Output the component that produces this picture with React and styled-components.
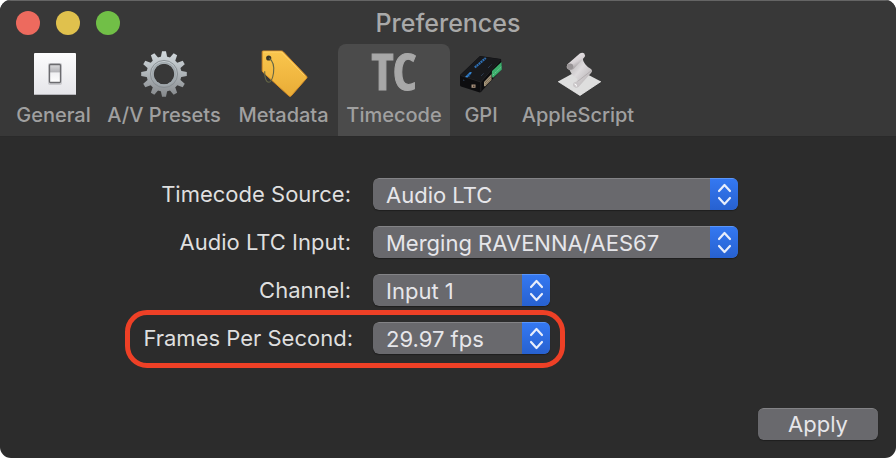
import React, { useState } from 'react'
import styled, { createGlobalStyle } from 'styled-components'


const GlobalStyle = createGlobalStyle`
    *, *::before, *::after{
        box-sizing: border-box;
    }
    body{
        margin: 0;
        background: #fff;
        font-family: Inter, "Liberation Sans", sans-serif;
    }
    button, select{
        font: inherit;
    }
`

const WindowStyle = styled.div`
    display: flex;
    flex-direction: column;
    min-height: 100vh;
    overflow: hidden;
    border-radius: 11px;
    background: #2c2c2c;
    color: #dfdfdf;
    font-size: 22px;
    line-height: 32px;
`

const Header = styled.header`
    background: #383838;
    border-top: 1px solid #656565;
    border-bottom: 1px solid #2a2a2a;
`

const TitleBar = styled.div`
    display: grid;
    grid-template-columns: 1fr auto 1fr;
    align-items: center;
    height: 43px;
    padding: 0 16px;
`

const WindowButtons = styled.div`
    display: flex;
    gap: 16px;
`

const WindowButton = styled.button`
    width: 24px;
    height: 24px;
    padding: 0;
    border: 0;
    border-radius: 50%;
    background: ${({ $color }) => $color};
`

const Title = styled.h1`
    margin: 0;
    color: #a9a9a9;
    font-size: 25px;
    font-weight: 500;
`

const Toolbar = styled.nav`
    display: grid;
    grid-template-columns: 91px 130px 109px 112px 62px 132px;
    padding: 0 8px;
`

const ToolbarButton = styled.button`
    display: flex;
    flex-direction: column;
    align-items: center;
    height: 92px;
    padding: 6px 0 0;
    border: 0;
    border-radius: 8px 8px 0 0;
    background: ${({ $active }) => ($active ? '#4b4b4b' : 'transparent')};
    color: #a0a0a0;
    font-size: 20px;
    font-weight: 500;
    line-height: 34px;
    white-space: nowrap;
    svg{
        display: block;
        flex: none;
        overflow: visible;
    }
`

const Form = styled.form`
    display: flex;
    flex: 1;
    flex-direction: column;
    padding: 41px 18px 18px 125px;
`

const Fields = styled.div`
    display: flex;
    flex-direction: column;
    gap: 16px;
    padding-right: 140px;
`

const Row = styled.div`
    position: relative;
    display: grid;
    grid-template-columns: 228px ${({ $short }) => ($short ? '177px' : '1fr')};
    gap: 20px;
    width: ${({ $short }) => ($short ? 'fit-content' : 'auto')};
`

const Highlight = styled.span`
    position: absolute;
    inset: -12px -15px -14px 0;
    border: 5px solid #ee4026;
    border-radius: 22px;
    pointer-events: none;
`

const Label = styled.label`
    padding-right: ${({ $wide }) => ($wide ? '0' : '2px')};
    text-align: right;
    white-space: nowrap;
`

const SelectWrap = styled.div`
    position: relative;
    overflow: hidden;
    border-radius: 6px;
    box-shadow: 0 1px 1px #1f1f1f;
`

const Select = styled.select`
    display: block;
    width: 100%;
    height: 32px;
    padding: 0 32px 2px 13px;
    border: 0;
    border-top: 1px solid #838386;
    border-radius: 6px;
    appearance: none;
    background: #69696d;
    color: #e6e6ea;
`

const Stepper = styled.span`
    position: absolute;
    top: 0;
    right: 0;
    bottom: 0;
    width: 28px;
    border-top: 1px solid #5a96fa;
    background: linear-gradient(#3478f1, #2761d0);
    pointer-events: none;
    svg{
        display: block;
    }
`

const ApplyButton = styled.button`
    width: 120px;
    height: 32px;
    margin-top: auto;
    align-self: flex-end;
    padding: 0;
    border: 0;
    border-top: 1px solid #838386;
    border-radius: 6px;
    background: #69696d;
    box-shadow: 0 1px 1px #1f1f1f;
    color: #e6e6ea;
    line-height: 31px;
`

function SwitchIcon() {
  return (
    <svg width="48" height="48" viewBox="0 0 48 48" aria-hidden="true">
        <defs>
            <linearGradient id="plate" x2="0" y2="1">
                <stop stopColor="#fcfcfd" />
                <stop offset="1" stopColor="#e5e5e9" />
            </linearGradient>
            <linearGradient id="rocker" x2="0" y2="1">
                <stop stopColor="#dcdcde" />
                <stop offset=".42" stopColor="#b2b2b6" />
                <stop offset=".46" stopColor="#f0f0f2" />
                <stop offset="1" stopColor="#fff" />
            </linearGradient>
        </defs>
        <rect x="4" y="3" width="42" height="42" rx="1" fill="url(#plate)" />
        <path d="M4.5 44.5h41" stroke="#b5b5ba" />
        <rect x="18" y="13" width="14" height="22" rx="2" fill="#c9c9cd" />
        <rect x="19.5" y="14.5" width="11" height="18" rx="1" fill="url(#rocker)" stroke="#6b6b6f" strokeWidth="1.3" />
    </svg>
  )
}

const teeth = [0, 30, 60, 90, 120, 150, 180, 210, 240, 270, 300, 330]

function GearIcon() {
  return (
    <svg width="48" height="48" viewBox="0 0 48 48" aria-hidden="true">
        <defs>
            <linearGradient id="steel" gradientUnits="userSpaceOnUse" x1="24" y1="1" x2="24" y2="47">
                <stop stopColor="#d3dade" />
                <stop offset=".5" stopColor="#aeb4b8" />
                <stop offset="1" stopColor="#85888b" />
            </linearGradient>
            <mask id="gearMask">
                <circle cx="24" cy="24" r="17.5" fill="#fff" />
                {teeth.map((angle) => (
                    <path key={angle} d="M20.5 9 22 1.2h4L27.5 9z" fill="#fff" transform={`rotate(${angle} 24 24)`} />
                ))}
                <circle cx="24" cy="24" r="10.3" fill="#000" />
            </mask>
        </defs>
        <rect width="48" height="48" fill="url(#steel)" mask="url(#gearMask)" />
        <circle cx="24" cy="24" r="13.6" fill="none" stroke="#858b90" strokeWidth=".9" />
        <circle cx="24" cy="24" r="11.3" fill="none" stroke="#a0a8ad" strokeWidth="1.6" />
    </svg>
  )
}

function TagIcon() {
  return (
    <svg width="48" height="48" viewBox="0 0 48 48" aria-hidden="true">
        <defs>
            <linearGradient id="tag" x2="0" y2="1">
                <stop stopColor="#fac64d" />
                <stop offset="1" stopColor="#e9ac37" />
            </linearGradient>
        </defs>
        <path
            d="M3 1h18.5q1 0 1.7.7L46.5 26.2q1 1 .2 2L31.3 45.8q-1.2 1.2-2.5 0L3 22.3q-.8-.8-.8-2V1.800Q2.200 1 3 1z"
            fill="url(#tag)"
            stroke="#d88f28"
            strokeWidth="1"
        />
        <path d="M3.5 2h18l23 23.5" fill="none" stroke="#ffd873" strokeWidth=".8" />
        <circle cx="8.7" cy="8" r="2.6" fill="#373327" />
        <path d="M9 8c4 3 5.500 8 4.500 15-.8 5-2 9-4.500 9.300-3 .2-4.500-5-4.300-11" fill="none" stroke="#646646" strokeWidth="1.1" />
    </svg>
  )
}

function TimecodeIcon() {
  return (
    <svg width="52" height="48" viewBox="0 0 52 48" aria-hidden="true">
        <text
            x="26"
            y="40"
            textAnchor="middle"
            fill="#a8a8a8"
            stroke="#a8a8a8"
            strokeWidth="1"
            fontFamily="'Liberation Sans Narrow', 'Open Sans Condensed', Roboto, sans-serif"
            fontSize="51"
            fontWeight="700"
        >
            TC
        </text>
    </svg>
  )
}

function BoxIcon() {
  return (
    <svg width="48" height="48" viewBox="0 0 48 48" aria-hidden="true">
        <path d="M3 25 23 6l21 3 1 10-21 23q-1 .7-2 .3L4 36.500q-1-.5-1-1.500z" fill="#0d0d0f" />
        <path d="M3.500 25 23 6.200 43.500 9.300 24 31.500z" fill="#18191c" />
        <path d="m3.500 25.400 20.300 6.600L43.700 9.600M23.800 32v9.500" fill="none" stroke="#303134" strokeWidth=".6" />
        <path d="m27 32 7.500-8v6L28 36.500l-1-.5z" fill="#a5967c" />
        <path d="m28 33 6-6.200M28.500 35l5.500-5.800" stroke="#6d5c45" strokeWidth=".7" />
        <path d="m35 21 9.500-9 .4 7.500-9 8.500-1.200-2z" fill="#3cae6c" />
        <path d="m36 25 8.300-8" stroke="#75c997" strokeWidth="1" strokeDasharray="1.500 1" />
        <rect x="14.500" y="34.500" width="4" height="3.300" fill="#a8937f" />
        <rect x="16" y="35.500" width="1.500" height="1.500" fill="#554237" />
        <path d="m8 27 5-5 2 .5-4.500 5z" fill="#398ddd" />
        <path d="m9.500 25.500 3.500 1M11 24l3 .7" stroke="#15487f" strokeWidth=".7" />
        <path d="m17.800 17.500 11-9.500" stroke="#2e6fb3" strokeWidth="2.200" strokeDasharray="2 .6" />
        <path d="m24 26 3-3M31 18l4-4M6 30l2 .7" stroke="#3c5778" strokeWidth=".8" strokeDasharray="1 .8" />
    </svg>
  )
}

function ScriptIcon() {
  return (
    <svg width="48" height="48" viewBox="0 0 48 48" aria-hidden="true">
        <defs>
            <linearGradient id="paper" x1="0" y1="0" x2="1" y2="1">
                <stop stopColor="#aaa7a8" />
                <stop offset=".45" stopColor="#dedbdd" />
                <stop offset="1" stopColor="#aaa5a7" />
            </linearGradient>
            <linearGradient id="roll" x1="0" y1="0" x2=".6" y2="1">
                <stop stopColor="#f3f0f2" />
                <stop offset=".6" stopColor="#d6d1d4" />
                <stop offset="1" stopColor="#8e898b" />
            </linearGradient>
        </defs>
        <path d="M4 31.500 25 20l22 11.500L26 45.500z" fill="#dedede" />
        <path d="M4 31.500 26 45.500l21-14" fill="none" stroke="#f4f4f4" strokeWidth=".7" />
        <path d="M15 18 28.500 7q.5 7.500 8.500 12 2 1.700 0 4L24.500 37q-4.500 1.500-5-2.500 3.500-3 4-5.500-7-4-8.500-11z" fill="url(#paper)" />
        <path d="m23.500 31.500 14-11" stroke="#8e898b" strokeWidth="1" opacity=".4" />
        <path d="M13.500 14.200 25.800 3.500q2.500-1.500 4.500 0 1.600 2-.3 4.300L19.500 19q-3.500 2-6-.3-1.500-2.200 0-4.500z" fill="url(#roll)" />
        <path d="M13.700 14.200q3-1.500 5 .2 1.500 2.300-.3 4.500-3 1.500-5-.3-1.300-2.300.3-4.400z" fill="#989395" />
        <path d="M19.500 33q2.500-2 5-.5 1.500 2.500-.3 4.500-2.500 1.500-4.700-.5-1-1.800 0-3.500z" fill="#c9c5c7" />
        <path d="M20.500 34q2.500 0 1.800 2.500" fill="none" stroke="#fff" strokeWidth="1" />
    </svg>
  )
}

const tabs = [
  { name: 'General', Icon: SwitchIcon },
  { name: 'A/V Presets', Icon: GearIcon },
  { name: 'Metadata', Icon: TagIcon },
  { name: 'Timecode', Icon: TimecodeIcon },
  { name: 'GPI', Icon: BoxIcon },
  { name: 'AppleScript', Icon: ScriptIcon },
]

function SelectRow({ id, label, value, short, highlighted }) {
  return (
    <Row $short={short}>
        <Label htmlFor={id} $wide={highlighted}>{label}</Label>
        <SelectWrap>
            <Select id={id} defaultValue={value}>
                <option value={value}>{value}</option>
            </Select>
            <Stepper>
                <svg width="28" height="30" viewBox="0 0 28 30" fill="none" stroke="#e7edfb" strokeWidth="2.2" strokeLinecap="round" strokeLinejoin="round" aria-hidden="true">
                    <path d="m9 12 5.500-6 5.500 6M9 19l5.500 6 5.500-6" />
                </svg>
            </Stepper>
        </SelectWrap>
        {highlighted && <Highlight />}
    </Row>
  )
}

function App() {
  const [activeTab, setActiveTab] = useState('Timecode')

  return (
    <WindowStyle>
        <GlobalStyle />
        <Header>
            <TitleBar>
                <WindowButtons>
                    <WindowButton $color="#ed6a5e" aria-label="Close" />
                    <WindowButton $color="#e0c14d" aria-label="Minimize" />
                    <WindowButton $color="#71bf47" aria-label="Zoom" />
                </WindowButtons>
                <Title>Preferences</Title>
            </TitleBar>
            <Toolbar>
                {tabs.map(({ name, Icon }) => (
                    <ToolbarButton key={name} $active={name === activeTab} onClick={() => setActiveTab(name)}>
                        <Icon />
                        {name}
                    </ToolbarButton>
                ))}
            </Toolbar>
        </Header>
        <Form onSubmit={(e) => e.preventDefault()}>
            <Fields>
                <SelectRow id="source" label="Timecode Source:" value="Audio LTC" />
                <SelectRow id="input" label="Audio LTC Input:" value="Merging RAVENNA/AES67" />
                <SelectRow id="channel" label="Channel:" value="Input 1" short />
                <SelectRow id="fps" label="Frames Per Second:" value="29.97 fps" short highlighted />
            </Fields>
            <ApplyButton type="submit">Apply</ApplyButton>
        </Form>
    </WindowStyle>
  )
}

export default App
